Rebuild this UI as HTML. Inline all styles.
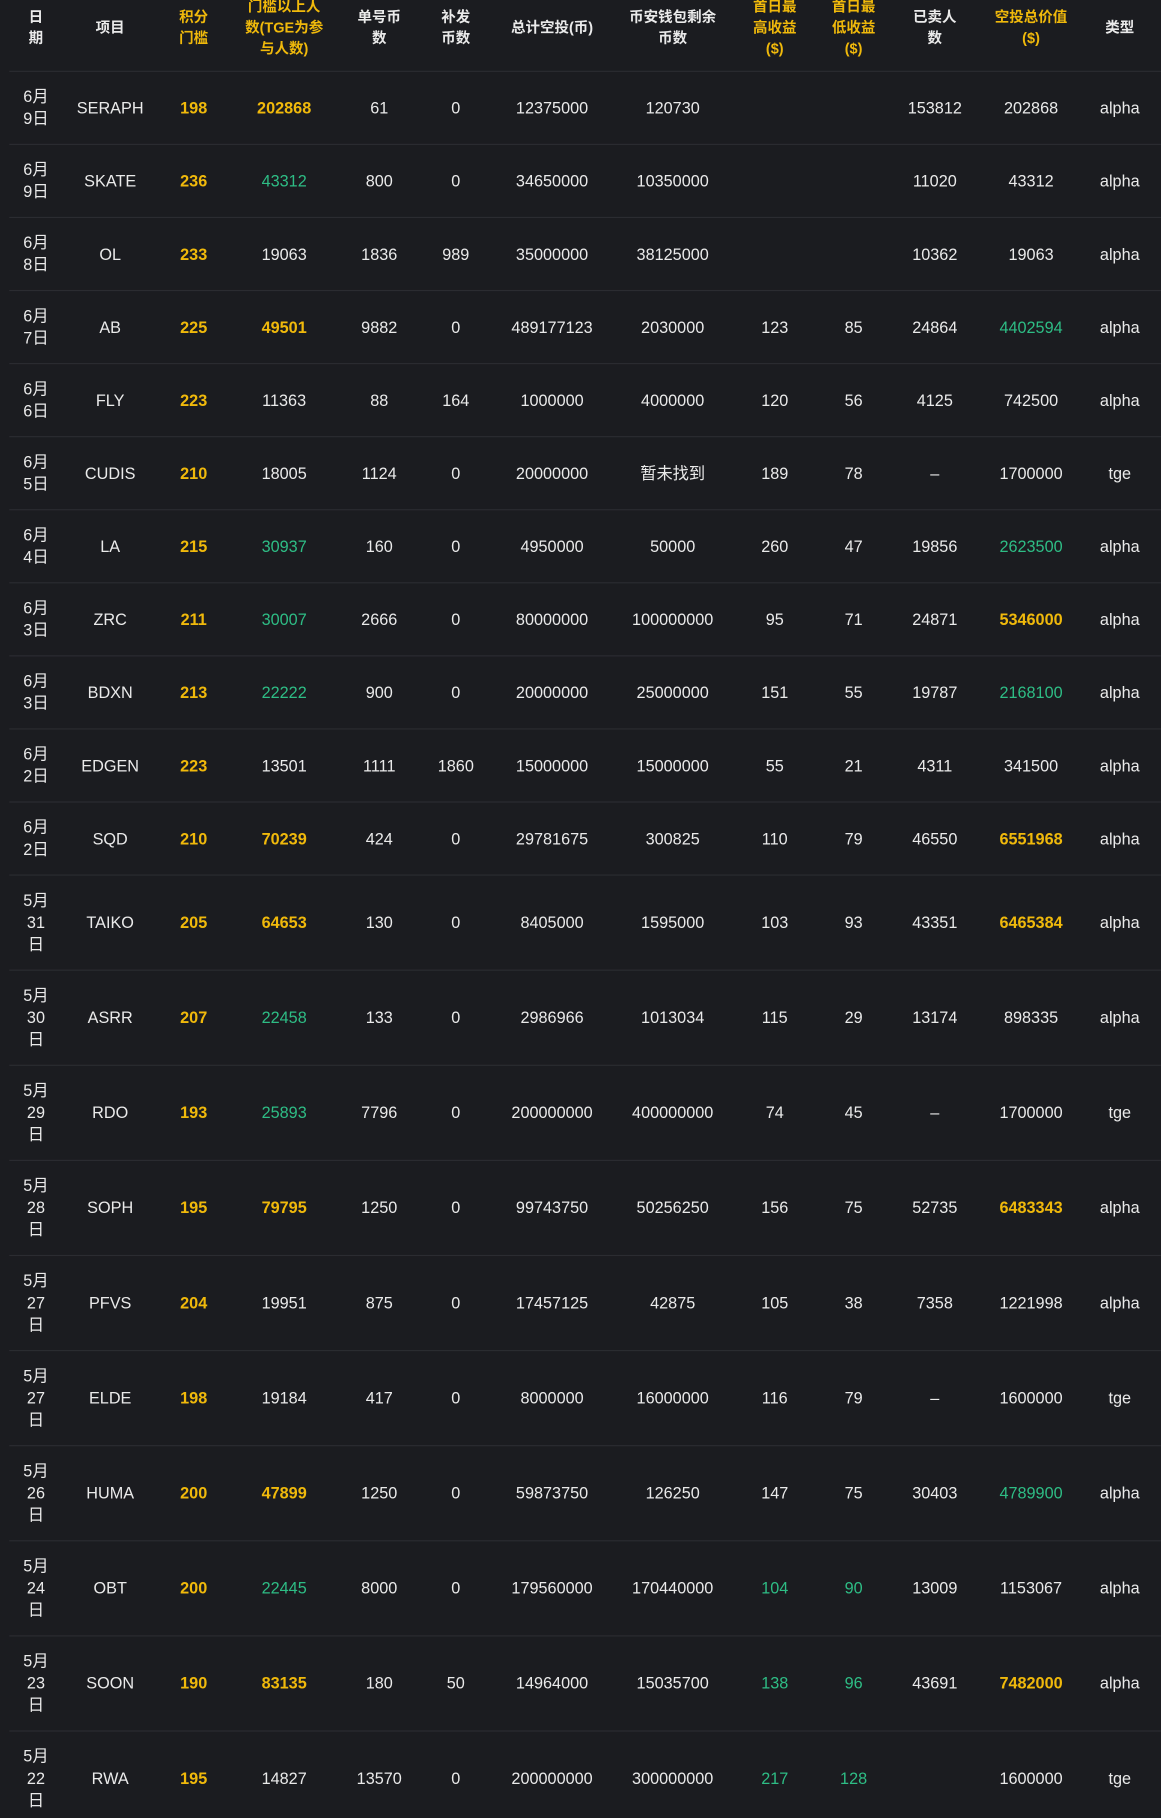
<!DOCTYPE html>
<html><head><meta charset="utf-8">
<style>
html,body{margin:0;padding:0;background:#1b1c20;overflow:hidden;}
body{width:1161px;height:1818px;}
#w{width:1001px;transform:scale(1.1598);transform-origin:0 0;font-family:"Liberation Sans","Noto Sans CJK SC",sans-serif;color:#eaeaea;font-size:14px;}
.r{display:flex;margin-left:8px;border-bottom:1px solid #2b2c31;box-sizing:border-box;}
.r>div{display:flex;align-items:center;justify-content:center;text-align:center;line-height:19px;}
.h{height:62px;}
.h>div{font-weight:bold;font-size:12.5px;line-height:18px;padding-bottom:14px;box-sizing:border-box;height:62px;overflow:visible;}
.a{height:63px;}
.b{height:82px;}
.y{color:#f0b90b;font-weight:bold;}
.g{color:#2ebd85;}
.c1{width:46px}.c2{width:82px}.c3{width:62px}.c4{width:94px}.c5{width:70px}.c6{width:62px}.c7{width:104px}.c8{width:104px}.c9{width:72px}.c10{width:64px}.c11{width:76px}.c12{width:90px}.c13{width:63px}
</style></head><body><div id="w">
<div class="r h">
<div class="c1">日<br>期</div><div class="c2">项目</div><div class="c3 y">积分<br>门槛</div><div class="c4 y">门槛以上人<br>数(TGE为参<br>与人数)</div><div class="c5">单号币<br>数</div><div class="c6">补发<br>币数</div><div class="c7">总计空投(币)</div><div class="c8">币安钱包剩余<br>币数</div><div class="c9 y">首日最<br>高收益<br>($)</div><div class="c10 y">首日最<br>低收益<br>($)</div><div class="c11">已卖人<br>数</div><div class="c12 y">空投总价值<br>($)</div><div class="c13">类型</div>
</div>
<div class="r a"><div class="c1">6月<br>9日</div><div class="c2">SERAPH</div><div class="c3 y">198</div><div class="c4 y">202868</div><div class="c5">61</div><div class="c6">0</div><div class="c7">12375000</div><div class="c8">120730</div><div class="c9"></div><div class="c10"></div><div class="c11">153812</div><div class="c12">202868</div><div class="c13">alpha</div></div>
<div class="r a"><div class="c1">6月<br>9日</div><div class="c2">SKATE</div><div class="c3 y">236</div><div class="c4 g">43312</div><div class="c5">800</div><div class="c6">0</div><div class="c7">34650000</div><div class="c8">10350000</div><div class="c9"></div><div class="c10"></div><div class="c11">11020</div><div class="c12">43312</div><div class="c13">alpha</div></div>
<div class="r a"><div class="c1">6月<br>8日</div><div class="c2">OL</div><div class="c3 y">233</div><div class="c4">19063</div><div class="c5">1836</div><div class="c6">989</div><div class="c7">35000000</div><div class="c8">38125000</div><div class="c9"></div><div class="c10"></div><div class="c11">10362</div><div class="c12">19063</div><div class="c13">alpha</div></div>
<div class="r a"><div class="c1">6月<br>7日</div><div class="c2">AB</div><div class="c3 y">225</div><div class="c4 y">49501</div><div class="c5">9882</div><div class="c6">0</div><div class="c7">489177123</div><div class="c8">2030000</div><div class="c9">123</div><div class="c10">85</div><div class="c11">24864</div><div class="c12 g">4402594</div><div class="c13">alpha</div></div>
<div class="r a"><div class="c1">6月<br>6日</div><div class="c2">FLY</div><div class="c3 y">223</div><div class="c4">11363</div><div class="c5">88</div><div class="c6">164</div><div class="c7">1000000</div><div class="c8">4000000</div><div class="c9">120</div><div class="c10">56</div><div class="c11">4125</div><div class="c12">742500</div><div class="c13">alpha</div></div>
<div class="r a"><div class="c1">6月<br>5日</div><div class="c2">CUDIS</div><div class="c3 y">210</div><div class="c4">18005</div><div class="c5">1124</div><div class="c6">0</div><div class="c7">20000000</div><div class="c8">暂未找到</div><div class="c9">189</div><div class="c10">78</div><div class="c11">–</div><div class="c12">1700000</div><div class="c13">tge</div></div>
<div class="r a"><div class="c1">6月<br>4日</div><div class="c2">LA</div><div class="c3 y">215</div><div class="c4 g">30937</div><div class="c5">160</div><div class="c6">0</div><div class="c7">4950000</div><div class="c8">50000</div><div class="c9">260</div><div class="c10">47</div><div class="c11">19856</div><div class="c12 g">2623500</div><div class="c13">alpha</div></div>
<div class="r a"><div class="c1">6月<br>3日</div><div class="c2">ZRC</div><div class="c3 y">211</div><div class="c4 g">30007</div><div class="c5">2666</div><div class="c6">0</div><div class="c7">80000000</div><div class="c8">100000000</div><div class="c9">95</div><div class="c10">71</div><div class="c11">24871</div><div class="c12 y">5346000</div><div class="c13">alpha</div></div>
<div class="r a"><div class="c1">6月<br>3日</div><div class="c2">BDXN</div><div class="c3 y">213</div><div class="c4 g">22222</div><div class="c5">900</div><div class="c6">0</div><div class="c7">20000000</div><div class="c8">25000000</div><div class="c9">151</div><div class="c10">55</div><div class="c11">19787</div><div class="c12 g">2168100</div><div class="c13">alpha</div></div>
<div class="r a"><div class="c1">6月<br>2日</div><div class="c2">EDGEN</div><div class="c3 y">223</div><div class="c4">13501</div><div class="c5">1111</div><div class="c6">1860</div><div class="c7">15000000</div><div class="c8">15000000</div><div class="c9">55</div><div class="c10">21</div><div class="c11">4311</div><div class="c12">341500</div><div class="c13">alpha</div></div>
<div class="r a"><div class="c1">6月<br>2日</div><div class="c2">SQD</div><div class="c3 y">210</div><div class="c4 y">70239</div><div class="c5">424</div><div class="c6">0</div><div class="c7">29781675</div><div class="c8">300825</div><div class="c9">110</div><div class="c10">79</div><div class="c11">46550</div><div class="c12 y">6551968</div><div class="c13">alpha</div></div>
<div class="r b"><div class="c1">5月<br>31<br>日</div><div class="c2">TAIKO</div><div class="c3 y">205</div><div class="c4 y">64653</div><div class="c5">130</div><div class="c6">0</div><div class="c7">8405000</div><div class="c8">1595000</div><div class="c9">103</div><div class="c10">93</div><div class="c11">43351</div><div class="c12 y">6465384</div><div class="c13">alpha</div></div>
<div class="r b"><div class="c1">5月<br>30<br>日</div><div class="c2">ASRR</div><div class="c3 y">207</div><div class="c4 g">22458</div><div class="c5">133</div><div class="c6">0</div><div class="c7">2986966</div><div class="c8">1013034</div><div class="c9">115</div><div class="c10">29</div><div class="c11">13174</div><div class="c12">898335</div><div class="c13">alpha</div></div>
<div class="r b"><div class="c1">5月<br>29<br>日</div><div class="c2">RDO</div><div class="c3 y">193</div><div class="c4 g">25893</div><div class="c5">7796</div><div class="c6">0</div><div class="c7">200000000</div><div class="c8">400000000</div><div class="c9">74</div><div class="c10">45</div><div class="c11">–</div><div class="c12">1700000</div><div class="c13">tge</div></div>
<div class="r b"><div class="c1">5月<br>28<br>日</div><div class="c2">SOPH</div><div class="c3 y">195</div><div class="c4 y">79795</div><div class="c5">1250</div><div class="c6">0</div><div class="c7">99743750</div><div class="c8">50256250</div><div class="c9">156</div><div class="c10">75</div><div class="c11">52735</div><div class="c12 y">6483343</div><div class="c13">alpha</div></div>
<div class="r b"><div class="c1">5月<br>27<br>日</div><div class="c2">PFVS</div><div class="c3 y">204</div><div class="c4">19951</div><div class="c5">875</div><div class="c6">0</div><div class="c7">17457125</div><div class="c8">42875</div><div class="c9">105</div><div class="c10">38</div><div class="c11">7358</div><div class="c12">1221998</div><div class="c13">alpha</div></div>
<div class="r b"><div class="c1">5月<br>27<br>日</div><div class="c2">ELDE</div><div class="c3 y">198</div><div class="c4">19184</div><div class="c5">417</div><div class="c6">0</div><div class="c7">8000000</div><div class="c8">16000000</div><div class="c9">116</div><div class="c10">79</div><div class="c11">–</div><div class="c12">1600000</div><div class="c13">tge</div></div>
<div class="r b"><div class="c1">5月<br>26<br>日</div><div class="c2">HUMA</div><div class="c3 y">200</div><div class="c4 y">47899</div><div class="c5">1250</div><div class="c6">0</div><div class="c7">59873750</div><div class="c8">126250</div><div class="c9">147</div><div class="c10">75</div><div class="c11">30403</div><div class="c12 g">4789900</div><div class="c13">alpha</div></div>
<div class="r b"><div class="c1">5月<br>24<br>日</div><div class="c2">OBT</div><div class="c3 y">200</div><div class="c4 g">22445</div><div class="c5">8000</div><div class="c6">0</div><div class="c7">179560000</div><div class="c8">170440000</div><div class="c9 g">104</div><div class="c10 g">90</div><div class="c11">13009</div><div class="c12">1153067</div><div class="c13">alpha</div></div>
<div class="r b"><div class="c1">5月<br>23<br>日</div><div class="c2">SOON</div><div class="c3 y">190</div><div class="c4 y">83135</div><div class="c5">180</div><div class="c6">50</div><div class="c7">14964000</div><div class="c8">15035700</div><div class="c9 g">138</div><div class="c10 g">96</div><div class="c11">43691</div><div class="c12 y">7482000</div><div class="c13">alpha</div></div>
<div class="r b"><div class="c1">5月<br>22<br>日</div><div class="c2">RWA</div><div class="c3 y">195</div><div class="c4">14827</div><div class="c5">13570</div><div class="c6">0</div><div class="c7">200000000</div><div class="c8">300000000</div><div class="c9 g">217</div><div class="c10 g">128</div><div class="c11"></div><div class="c12">1600000</div><div class="c13">tge</div></div>
</div></body></html>
